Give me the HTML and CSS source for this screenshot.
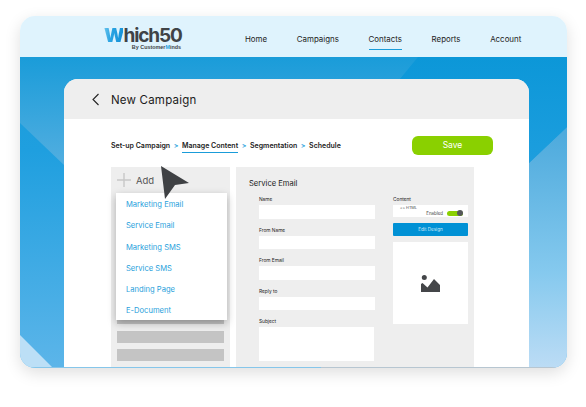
FILE: index.html
```html
<!DOCTYPE html>
<html lang="en">
<head>
<meta charset="utf-8">
<title>New Campaign</title>
<link rel="stylesheet" href="styles.css">
</head>
<body>
<div class="app">
  <header class="topbar">
    <div class="logo">
      <div class="logo-word"><span class="logo-w">W</span>hich50</div>
      <div class="logo-sub">By Customer<span class="logo-m">M</span>inds</div>
    </div>
    <nav class="nav">
      <a class="nav-item">Home</a>
      <a class="nav-item">Campaigns</a>
      <a class="nav-item active">Contacts</a>
      <a class="nav-item">Reports</a>
      <a class="nav-item">Account</a>
    </nav>
  </header>
  <main class="stage">
    <svg class="bg-shapes" viewBox="0 0 547 311" width="547" height="311" aria-hidden="true">
      <defs>
        <linearGradient id="baseFill" x1="0" y1="0" x2="0" y2="311" gradientUnits="userSpaceOnUse">
          <stop offset="0" stop-color="#1a9cd9"/>
          <stop offset=".3" stop-color="#1f9fdf"/>
          <stop offset="1" stop-color="#5cb5e9"/>
        </linearGradient>
        <linearGradient id="upperLeft" x1="0" y1="0" x2="0" y2="108" gradientUnits="userSpaceOnUse">
          <stop offset="0" stop-color="#1a9cd9"/>
          <stop offset="1" stop-color="#52aee0"/>
        </linearGradient>
        <linearGradient id="upperRight" x1="0" y1="0" x2="0" y2="106" gradientUnits="userSpaceOnUse">
          <stop offset="0" stop-color="#0c97d8"/>
          <stop offset="1" stop-color="#1d9ede"/>
        </linearGradient>
        <linearGradient id="lowerRight" x1="0" y1="70" x2="0" y2="311" gradientUnits="userSpaceOnUse">
          <stop offset="0" stop-color="#4ba9dc"/>
          <stop offset=".6" stop-color="#85c9ee"/>
          <stop offset="1" stop-color="#bcdcf5"/>
        </linearGradient>
      </defs>
      <rect width="547" height="311" fill="url(#baseFill)"/>
      <polygon points="0,0 398,0 380,22 44,108 0,66" fill="url(#upperLeft)"/>
      <polygon points="509,106 547,70 547,311 509,311" fill="url(#lowerRight)"/>
      <polygon points="398,0 547,0 547,70 509,106 380,22" fill="url(#upperRight)"/>
      <polygon points="0,278 33,311 0,311" fill="#bcdff6"/>
    </svg>
    <section class="card">
      <div class="card-head">
        <svg class="back" width="8" height="13" viewBox="0 0 8 13" aria-hidden="true"><path d="M6.5 1 1 6.5 6.5 12" fill="none" stroke="#222" stroke-width="1.1"/></svg>
        <h1 class="card-title">New Campaign</h1>
      </div>
      <div class="card-body">
        <div class="steps">
          <span class="step">Set-up Campaign</span><span class="sep">&gt;</span>
          <span class="step current">Manage Content</span><span class="sep">&gt;</span>
          <span class="step">Segmentation</span><span class="sep">&gt;</span>
          <span class="step">Schedule</span>
          <button class="save">Save</button>
        </div>
        <div class="columns">
          <aside class="side">
            <div class="add">
              <svg width="14" height="14" viewBox="0 0 14 14" aria-hidden="true"><path d="M7 0v14M0 7h14" stroke="#c8c8c8" stroke-width="1.4"/></svg>
              <span>Add</span>
            </div>
            <div class="bars">
              <div class="bar"></div>
              <div class="bar"></div>
              <div class="bar"></div>
            </div>
            <ul class="menu">
              <li class="menu-item">Marketing Email</li>
              <li class="menu-item">Service Email</li>
              <li class="menu-item">Marketing SMS</li>
              <li class="menu-item">Service SMS</li>
              <li class="menu-item">Landing Page</li>
              <li class="menu-item">E-Document</li>
            </ul>
          </aside>
          <section class="form">
            <h2 class="form-title">Service Email</h2>
            <div class="form-cols">
              <div class="fields">
                <label class="label">Name</label><div class="input"></div>
                <label class="label">From Name</label><div class="input"></div>
                <label class="label">From Email</label><div class="input"></div>
                <label class="label">Reply to</label><div class="input"></div>
                <label class="label">Subject</label><div class="input area"></div>
              </div>
              <div class="content-col">
                <label class="label">Content</label>
                <div class="content-box">
                  <span class="html">&lt;&gt; HTML</span>
                  <div class="enabled"><span>Enabled</span><i class="toggle"></i></div>
                </div>
                <button class="edit">Edit Design</button>
                <div class="image-box">
                  <svg width="19" height="17" viewBox="0 0 19 17" aria-hidden="true">
                    <circle cx="3.3" cy="2.6" r="2.5" fill="#444649"/>
                    <path d="M0 17V9l1.5-1 5 4.5L13 4l6 6v7z" fill="#444649"/>
                  </svg>
                </div>
              </div>
            </div>
          </section>
        </div>
      </div>
    </section>
    <div class="progress"></div>
  </main>
  <svg class="cursor" width="30" height="36" viewBox="0 0 30 36" aria-hidden="true"><polygon points="1,1 29,18 15,20 5,34" fill="#3f4144"/></svg>
</div>
</body>
</html>
```
FILE: styles.css
```css
* { box-sizing: border-box; }
html, body { margin: 0; padding: 0; background: #fff; }
body { width: 586px; height: 407px; overflow: hidden; padding: 16px 19px 0 20px; font-family: Inter, "Liberation Sans", sans-serif; }
.app { position: relative; width: 547px; height: 352px; border-radius: 15px; box-shadow: 0 5px 16px rgba(0,0,0,.13); display: flex; flex-direction: column; }
.topbar { height: 41px; flex: none; background: #dff3fd; border-radius: 15px 15px 0 0; display: flex; align-items: center; padding: 0 0 0 84px; }
.logo { width: 141px; flex: none; color: #3f4347; margin-top: 3px; }
.logo-word { font: 700 19px/17px Inter, sans-serif; letter-spacing: -1.1px; }
.logo-w { font-weight: 900; color: transparent; background: linear-gradient(100deg, #6cc6ee 0%, #2aa3e2 40%, #128fd6 100%); -webkit-background-clip: text; background-clip: text; }
.logo-sub { width: 77px; text-align: right; font: 700 5.4px/6px "Liberation Sans", sans-serif; white-space: nowrap; }
.logo-m { color: #2a9fdc; }
.nav { display: flex; gap: 29.7px; font-size: 7.9px; color: #222; padding-top: 8px; }
.nav-item { padding: 2px 0 5px; border-bottom: 1px solid transparent; }
.nav-item.active { border-bottom-color: #1a9cd9; }
.stage { position: relative; flex: 1; min-height: 0; padding: 22px 38px 0 44px; border-radius: 0 0 15px 15px; overflow: hidden; }
.bg-shapes { position: absolute; left: 0; top: 0; }
.card { position: relative; height: 100%; border-radius: 14px 14px 0 0; background: #fff; overflow: hidden; }
.card-head { height: 40px; background: #eee; display: flex; align-items: center; padding: 0 0 0 28px; gap: 11px; }
.card-title { margin: 1px 0 0; font-size: 11.5px; font-weight: 400; color: #1c1c1c; letter-spacing: .2px; }
.card-body { padding: 16px 36px 0 47px; }
.steps { display: flex; align-items: center; height: 20px; gap: 3.6px; font-size: 7px; font-weight: 600; color: #222; }
.step.current { border-bottom: 1px solid #1a9cd9; padding: 3px 0 2px; margin-top: 1px; }
.sep { color: #2a9fdc; }
.save { margin-left: auto; width: 81px; height: 19px; border: 0; border-radius: 6px; background: #8ad000; color: #fff; font: 400 8.5px Inter, sans-serif; }
.columns { display: flex; gap: 6px; margin-top: 12px; height: 201px; padding-right: 19px; }
.side { position: relative; width: 119px; flex: none; background: #eee; padding: 0 6px; }
.add { display: flex; align-items: center; gap: 5px; height: 26px; font-size: 9.5px; color: #555; }
.bars { margin-top: 119px; display: flex; flex-direction: column; gap: 6.5px; }
.bar { height: 12px; background: #c4c4c4; }
.menu { position: absolute; left: 5px; top: 26px; width: 111px; height: 127px; margin: 0; padding: 1px 0 0 10px; list-style: none; background: #fff; box-shadow: 0 3px 8px rgba(0,0,0,.28); font-size: 7.6px; color: #2a9fdc; }
.menu-item { height: 21.3px; line-height: 21.3px; }
.form { flex: 1; background: #eee; padding: 12px 6px 0 13px; }
.form-title { margin: 0 0 8px; font-size: 7.6px; font-weight: 400; color: #222; }
.form-cols { display: flex; gap: 18px; padding-left: 10px; }
.fields { width: 116px; flex: none; }
.label { display: block; font-size: 4.8px; height: 6px; line-height: 6px; margin-bottom: 3px; color: #222; }
.input { height: 13.5px; background: #fff; margin-bottom: 8px; }
.area { width: 115px; height: 34px; margin-bottom: 0; }
.content-col { width: 75px; flex: none; }
.content-box { height: 12px; background: #fff; position: relative; padding-left: 7px; font-size: 3.8px; color: #444; }
.html { display: block; line-height: 6px; }
.enabled { position: absolute; right: 5px; bottom: 0; display: flex; align-items: center; gap: 4px; font-size: 4.4px; height: 8px; color: #444; }
.toggle { position: relative; display: block; width: 16px; height: 5px; border-radius: 3px; background: #8ad000; }
.toggle::after { content: ""; position: absolute; right: 0; top: -0.5px; width: 6px; height: 6px; border-radius: 50%; background: #55585a; }
.edit { display: block; width: 75px; height: 13px; margin-top: 6px; padding: 0; border: 0; border-radius: 1px; background: #0091d5; color: #cfe9f7; font: 4.6px Inter, sans-serif; }
.image-box { height: 82px; margin-top: 6px; background: #fff; display: flex; align-items: center; justify-content: center; }
.progress { position: absolute; left: 0; right: 0; bottom: 0; height: 1px; background: linear-gradient(90deg, #86c6ea 0 55%, #b7c6d1 55%); }
.cursor { position: absolute; left: 140px; top: 149px; }
```
